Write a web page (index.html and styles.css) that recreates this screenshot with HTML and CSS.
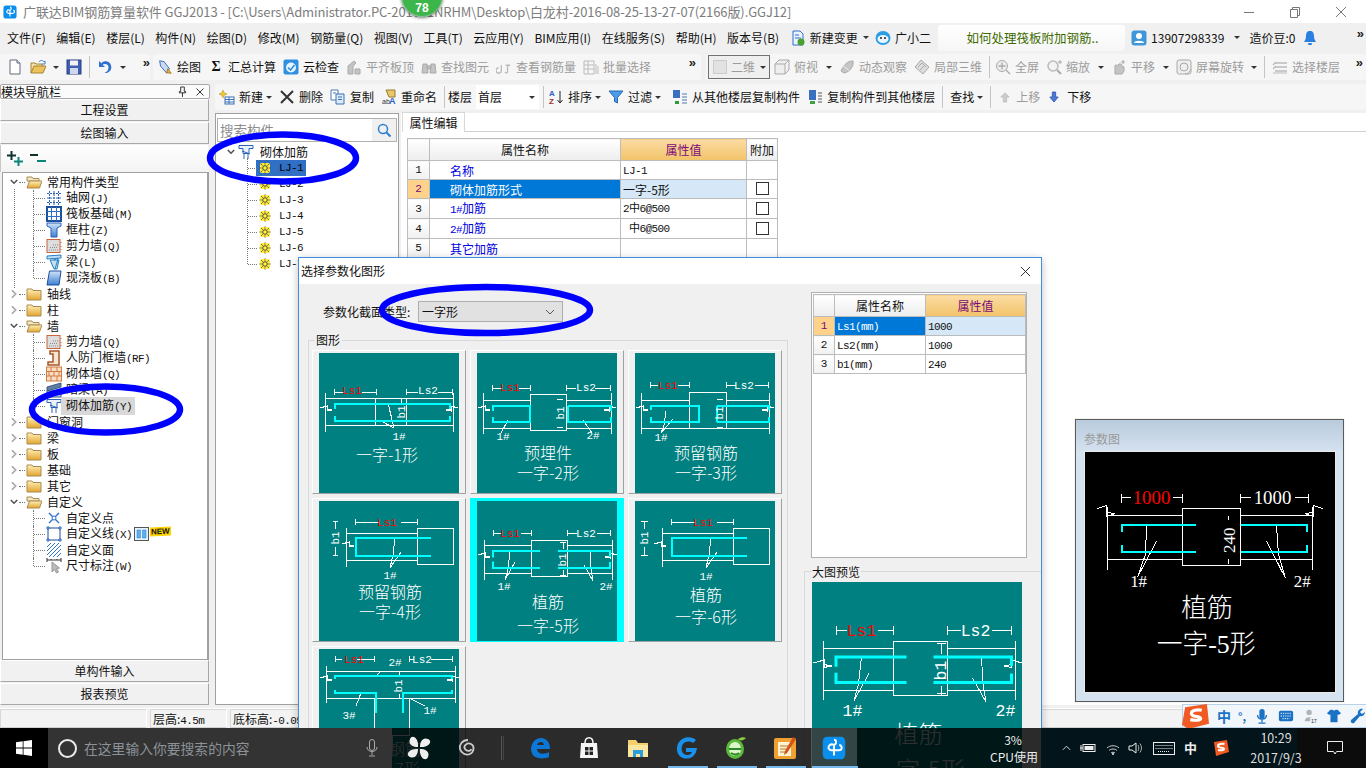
FILE: index.html
```html
<!DOCTYPE html>
<html lang="zh-CN">
<head>
<meta charset="utf-8">
<title>广联达BIM钢筋算量软件 GGJ2013</title>
<link rel="stylesheet" href="styles.css">
</head>
<body>
<svg class="defs" width="0" height="0" aria-hidden="true">
<defs>
<linearGradient id="gy" x1="0" y1="0" x2="0" y2="1"><stop offset="0" stop-color="#fff0b8"/><stop offset="1" stop-color="#e2a52e"/></linearGradient>
<linearGradient id="gb" x1="0" y1="0" x2="0" y2="1"><stop offset="0" stop-color="#cfe4fa"/><stop offset="1" stop-color="#3f7fd0"/></linearGradient>
</defs>
<symbol id="chr" viewBox="0 0 8 12"><path d="M1.500 1.500 6 6l-4.500 4.500" fill="none" stroke="#a8a8a8" stroke-width="2"/></symbol>
<symbol id="chd" viewBox="0 0 10 8"><path d="M1 1.500l4 4 4-4" fill="none" stroke="#555" stroke-width="2"/></symbol>
<symbol id="fc" viewBox="0 0 16 16"><path d="M1 3h5l1 1.500h8V14H1z" fill="url(#gy)" stroke="#a98c55"/></symbol>
<symbol id="fo" viewBox="0 0 16 16"><path d="M1 3h5l1 1.500h6V7H1z" fill="#f4e6c0" stroke="#a98c55"/><path d="M1 14 3.500 7H16l-2.500 7z" fill="url(#gy)" stroke="#a98c55"/></symbol>
<symbol id="grid" viewBox="0 0 16 16"><path d="M3.500 1v14M8 1v14M12.500 1v14M1 3.500h14M1 8h14M1 12.500h14" stroke="#2b62b8" stroke-dasharray="2 1" fill="none"/></symbol>
<symbol id="raft" viewBox="0 0 16 16"><rect x="1" y="1" width="14" height="14" fill="#fff" stroke="#1c4f9c" stroke-width="2"/><path d="M5.500 1v14M10.500 1v14M1 5.500h14M1 10.500h14" stroke="#2f70c8"/></symbol>
<symbol id="col" viewBox="0 0 16 16"><path d="M1 1h14v3l-4 2v9H5V6L1 4z" fill="url(#gb)" stroke="#2b62b8"/></symbol>
<symbol id="shear" viewBox="0 0 16 16"><rect x="1" y="1.500" width="13" height="13" fill="#ddd" stroke="#c8663a"/><path d="M3 12h9M4 9.500h8M7 7h5" stroke="#8a8a8a" stroke-dasharray="1 1"/><path d="M15 4v1M15 8v1M15 11v1" stroke="#c8663a"/></symbol>
<symbol id="beam" viewBox="0 0 16 16"><path d="M1 2l14-1v3L1 5zM4 6h9l-2 9H8z" fill="#bfe0f4" stroke="#2b7fc0"/><path d="M8 6l4-2M9 15 12 5" stroke="#2b7fc0" fill="none"/></symbol>
<symbol id="slab" viewBox="0 0 16 16"><path d="M3.500 1H15l-2 14H1z" fill="url(#gb)" stroke="#1c4f9c"/></symbol>
<symbol id="rfw" viewBox="0 0 16 16"><path d="M4 1h9v14H2v-3h5V4H4z" fill="#f6e5cf" stroke="#a9562a" stroke-width="1.500"/></symbol>
<symbol id="brick" viewBox="0 0 16 16"><rect x=".5" y="1" width="15" height="14" fill="#f9dcc2" stroke="#d07a45"/><path d="M.5 5.500h15M.5 10h15M5 1v4.500M11 1v4.500M3 5.500V10M8 5.500V10M13 5.500V10M5 10v5M11 10v5" stroke="#d07a45" fill="none"/></symbol>
<symbol id="lj" viewBox="0 0 16 16"><path d="M1 1.500h14v3H11v5H5v-5H1zM6 10v5M10 10v5M4 7l8 3" fill="#eaf3fb" stroke="#2b62b8"/></symbol>
<symbol id="hid" viewBox="0 0 16 16"><path d="M1 5 15 1v4L1 9z" fill="#5d7fa6" stroke="#3c5a80"/><path d="M1 9h14v6H1z" fill="#cfd9e6" stroke="#3c5a80"/></symbol>
<symbol id="pt" viewBox="0 0 16 16"><path d="M3 3l10 10M13 3 3 13" stroke="#2f70c8" stroke-width="1.400"/><circle cx="8" cy="8" r="2" fill="#fff" stroke="#2f70c8"/></symbol>
<symbol id="ln" viewBox="0 0 16 16"><rect x="2" y="2" width="12" height="12" fill="none" stroke="#1c4f9c"/><path d="M1 1h2v2H1zM13 1h2v2h-2zM1 13h2v2H1zM13 13h2v2h-2z" fill="#fff" stroke="#1c5fc0"/></symbol>
<symbol id="fa" viewBox="0 0 16 16"><path d="M1 5 5 1M1 9 9 1M1 13 13 1M3 15 15 3M7 15l8-8M11 15l4-4" stroke="#2f70c8"/></symbol>
<symbol id="dm" viewBox="0 0 16 16"><path d="M1 0v4M1 2h14M15 0v4M5 2v-1M11 2v-1" stroke="#333" fill="none"/><path d="M6 4l0 10 2.500-2.500 2 3.500 2-1-2-3.500 3-.5z" fill="#bbb" stroke="#999"/></symbol>
<symbol id="gear" viewBox="0 0 12 12"><rect x="1" y="1" width="10" height="10" rx="2" fill="#ffef3a"/><circle cx="6" cy="6" r="2.300" fill="#fff23a" stroke="#444"/><path d="M6 .5v2M6 9.500v2M.5 6h2M9.500 6h2M2 2l1.500 1.500M10 2 8.500 3.500M2 10l1.500-1.500M10 10 8.500 8.500" stroke="#333" stroke-dasharray="1 .5"/></symbol>
<symbol id="app" viewBox="0 0 16 16"><rect x=".5" y=".5" width="15" height="15" rx="3" fill="#0a8fee"/><path d="M8 2.500c1.800 0 1.800 3 0 3.500v7M8 6c-3-1.500-5.500 2.500-2 3.500h5c3 0 2.500-3.500.5-3.500" fill="none" stroke="#fff" stroke-width="1.300"/></symbol>
<symbol id="doc" viewBox="0 0 16 16"><path d="M3 1h7l3 3v11H3z" fill="#fff" stroke="#667"/><path d="M10 1v3h3" fill="#dde" stroke="#667"/></symbol>
<symbol id="opn" viewBox="0 0 16 16"><path d="M1 14V4h4l1 1h6v2" fill="#f4e3a8" stroke="#a28437"/><path d="M1 14 4 7h12l-3 7z" fill="#eec25b" stroke="#a28437"/><path d="M9 3c1-2 4-2 5 0l1-1v3h-3" fill="none" stroke="#3a7fc8"/></symbol>
<symbol id="sav" viewBox="0 0 16 16"><rect x="1" y="1" width="14" height="14" fill="#3f5fb5" stroke="#2a3c80"/><rect x="4" y="1.500" width="8" height="5" fill="#f3f3f3"/><rect x="4" y="9" width="8" height="6" fill="#d0d8ec"/></symbol>
<symbol id="und" viewBox="0 0 16 16"><path d="M2 2v6h6L5.500 5.700C8 4 12 5 11.500 9c-.2 2-1.500 4-4 5 4.500.5 7-3 6.800-6C14 2.500 8 .5 4.300 4.200z" fill="#2f6fd0"/></symbol>
<symbol id="drw" viewBox="0 0 18 18"><path d="M3 2l5 1 6 8-3 5-7-8z" fill="#c9dbf4" stroke="#2f5fa8"/><path d="M12 11l4 5-5-.5z" fill="#f5b642" stroke="#a67312"/></symbol>
<symbol id="cld" viewBox="0 0 16 16"><rect x=".5" y=".5" width="15" height="15" rx="2" fill="#2f8fe0"/><circle cx="8" cy="8.500" r="5" fill="#e7f3fd"/><path d="M5 8.500l2.500 2.500 4-5" fill="none" stroke="#2f8fe0" stroke-width="1.600"/></symbol>
<symbol id="ga" viewBox="0 0 16 16"><path d="M2 15V7l6-5 2 2-3 3v8zM9 15v-5h5v5z" fill="#c4c4c4" stroke="#aaa"/></symbol>
<symbol id="gb2" viewBox="0 0 16 16"><path d="M2 5h4l1 9H1zM10 5h4l1 9H9zM6 7h4v3H6z" fill="#c4c4c4" stroke="#aaa"/></symbol>
<symbol id="gc" viewBox="0 0 18 16"><path d="M3 9a3 3 0 1 0 3 3V6M11 6h5M13 6v7c0 2-2 2-3 1" fill="none" stroke="#bbb" stroke-width="1.500"/></symbol>
<symbol id="gd" viewBox="0 0 16 16"><path d="M1 2h10v13H1zM1 6h10M1 10h10M5 2v13M13 5v10M15 7v8" fill="none" stroke="#bbb"/></symbol>
<symbol id="cube" viewBox="0 0 16 16"><path d="M1 5h10v10H1zM1 5l4-4h10L11 5M15 1v10l-4 4" fill="#eee" stroke="#aaa"/></symbol>
<symbol id="orb" viewBox="0 0 16 16"><path d="M2 12C5 5 9 2 14 2c1 5-3 11-9 12z" fill="#c6c6c6" stroke="#aaa"/><path d="M4 7c2 1 6 4 7 6" stroke="#eee" fill="none"/></symbol>
<symbol id="loc" viewBox="0 0 16 16"><path d="M1 8l6-7 8 7-6 7z" fill="#ddd" stroke="#aaa"/><path d="M4 8l4-4 4 4M6 11l4-4" stroke="#aaa" fill="none"/></symbol>
<symbol id="zm" viewBox="0 0 16 16"><circle cx="7" cy="7" r="5.500" fill="#eee" stroke="#aaa"/><path d="M7 3.500v7M3.500 7h7M11 11l4 4" stroke="#aaa" stroke-width="1.300"/></symbol>
<symbol id="zm2" viewBox="0 0 16 16"><circle cx="7" cy="7" r="5" fill="#f3f3f3" stroke="#bbb" stroke-width="1.500"/><path d="M11 11l4 4" stroke="#aaa" stroke-width="2"/><path d="M14 1v4M12 3h4" stroke="#aaa"/></symbol>
<symbol id="pan" viewBox="0 0 16 16"><path d="M4 15V8C3 6 6 5 7 7l1-2c2-1 3 1 3 2l2 1v4l-2 3z" fill="#c4c4c4" stroke="#aaa"/><path d="M12 1v4M10 3h4" stroke="#aaa"/></symbol>
<symbol id="rot" viewBox="0 0 16 16"><rect x="1" y="1" width="14" height="14" rx="2" fill="#eee" stroke="#aaa"/><circle cx="8" cy="8" r="4" fill="none" stroke="#aaa"/><path d="M9 15c3 0 5-2 6-5" stroke="#aaa" fill="none"/></symbol>
<symbol id="flr" viewBox="0 0 16 16"><path d="M3 4h12M3 8h12M3 12h12M1 6l3-3M1 10l3-3" stroke="#bbb" fill="none" stroke-width="1.300"/><path d="M1 14h14" stroke="#bbb"/></symbol>
<symbol id="nw2" viewBox="0 0 16 16"><rect x="6" y="8" width="9" height="7" fill="#fff" stroke="#3a70b5"/><path d="M6 10.500h9M6 13h9M10 8v7" stroke="#3a70b5"/><path d="M4 1l1.200 2.800L8 5 5.200 6.200 4 9 2.800 6.200 0 5l2.800-1.200z" fill="#f2c833" stroke="#b28a15" stroke-width=".5"/></symbol>
<symbol id="del" viewBox="0 0 16 16"><path d="M2 2l12 12M14 2 2 14" stroke="#333" stroke-width="2"/></symbol>
<symbol id="cp" viewBox="0 0 16 16"><path d="M1 1h7v10H1z" fill="#fff" stroke="#4a7ab5"/><path d="M6 5h8v10H6z" fill="#dbe9f8" stroke="#3a70b5"/><path d="M3 4h3M8 8h4M8 10.500h4" stroke="#3a70b5"/></symbol>
<symbol id="flt" viewBox="0 0 16 16"><path d="M1 2h14L9.500 8.500V14l-3-1.500v-4z" fill="#4a9bea" stroke="#2868b0"/></symbol>
<symbol id="cpf" viewBox="0 0 16 16"><path d="M1 1h7v8H1z" fill="#3a70c0"/><path d="M10 5h5M10 8h5M10 11h5M10 14h5" stroke="#4a7ab5"/><path d="M3 12h4v3H3z" fill="#2e9a3b"/></symbol>
<symbol id="upa" viewBox="0 0 12 14"><path d="M6 2l5 5H8v6H4V7H1z" fill="#ccc" stroke="#bbb"/></symbol>
<symbol id="dna" viewBox="0 0 12 14"><path d="M4 1h4v6h3l-5 6-5-6h3z" fill="#4a7ad8" stroke="#2f56ad"/></symbol>
<symbol id="cpy2" viewBox="0 0 16 16"><rect x="2" y="1" width="7" height="10" fill="#3a70c0"/><path d="M11 4h4M11 7h4M11 10h4M11 13h4" stroke="#555"/><path d="M3 12h5v3H3z" fill="#3da241"/></symbol>
<symbol id="brd" viewBox="0 0 16 16"><path d="M3 1h7l3 3v11H3z" fill="#eaf3fc" stroke="#2f6fc8"/><path d="M5 5h4M5 8h6" stroke="#2f6fc8"/><circle cx="11" cy="12" r="3.500" fill="#4aa02c"/></symbol>
<symbol id="bot" viewBox="0 0 16 16"><ellipse cx="8" cy="8" rx="7.500" ry="7" fill="#2c9ee6"/><ellipse cx="8" cy="9" rx="5.500" ry="4" fill="#eaf7ff"/><circle cx="6" cy="8" r="1" fill="#222"/><circle cx="10" cy="8" r="1" fill="#222"/></symbol>
<symbol id="usr" viewBox="0 0 16 16"><rect x=".5" y=".5" width="15" height="15" rx="3" fill="#3f96d8"/><circle cx="8" cy="6" r="3" fill="#fff"/><path d="M3 13c0-3 10-3 10 0z" fill="#fff"/></symbol>
<symbol id="bel" viewBox="0 0 14 16"><path d="M7 1c3 0 4 2 4 5 0 3 1 4 2 6H1c1-2 2-3 2-6 0-3 1-5 4-5z" fill="#2b7fe0"/><rect x="5" y="13" width="4" height="2" rx="1" fill="#2b7fe0"/></symbol>
</svg>

<div class="app">
  <header class="titlebar">
    <svg class="ic14"><use href="#app"/></svg>
    <span class="wintitle">广联达BIM钢筋算量软件 GGJ2013 - [C:\Users\Administrator.PC-201701NRHM\Desktop\白龙村-2016-08-25-13-27-07(2166版).GGJ12]</span>
    <div class="winbtns">
      <svg class="wb" viewBox="0 0 12 12"><path d="M1 6.500h10" stroke="#777"/></svg>
      <svg class="wb" viewBox="0 0 12 12"><path d="M1.500 3.500h7v8h-7zM3.500 3.500v-2h7v8h-2" fill="none" stroke="#777"/></svg>
      <svg class="wb" viewBox="0 0 12 12"><path d="M1 1l10 10M11 1 1 11" stroke="#777"/></svg>
    </div>
  </header>

  <nav class="menubar">
    <span>文件(F)</span><span>编辑(E)</span><span>楼层(L)</span><span>构件(N)</span><span>绘图(D)</span><span>修改(M)</span><span>钢筋量(Q)</span><span>视图(V)</span><span>工具(T)</span><span>云应用(Y)</span><span>BIM应用(I)</span><span>在线服务(S)</span><span>帮助(H)</span><span>版本号(B)</span>
    <span class="mi"><svg class="ic16"><use href="#brd"/></svg>新建变更</span><i class="ar ar-n"></i>
    <span class="mi bot"><svg class="ic16"><use href="#bot"/></svg>广小二</span>
    <span class="news">如何处理筏板附加钢筋..</span>
    <span class="mi acct"><svg class="ic16"><use href="#usr"/></svg>13907298339</span><i class="ar ar-m"></i>
    <span class="bean">造价豆:0</span><svg class="bell"><use href="#bel"/></svg>
    <span class="more more-m">»</span>
  </nav>

  <div class="toolrow">
    <div class="seg seg1">
      <svg class="ic16"><use href="#doc"/></svg>
      <svg class="ic16 m7"><use href="#opn"/></svg><i class="ar"></i>
      <svg class="ic16 m7"><use href="#sav"/></svg>
      <b class="sep"></b>
      <svg class="ic16 m7"><use href="#und"/></svg><i class="ar"></i>
      <span class="more">»</span>
    </div>
    <div class="seg seg2">
      <span class="ti first"><svg class="ic16"><use href="#drw"/></svg>绘图</span>
      <span class="ti"><b class="sigma">Σ</b>汇总计算</span>
      <span class="ti"><svg class="ic16"><use href="#cld"/></svg>云检查</span>
      <span class="ti off"><svg class="ic16"><use href="#ga"/></svg>平齐板顶</span>
      <span class="ti off"><svg class="ic16"><use href="#gb2"/></svg>查找图元</span>
      <span class="ti off"><svg class="ic16"><use href="#gc"/></svg>查看钢筋量</span>
      <span class="ti off"><svg class="ic16"><use href="#gd"/></svg>批量选择</span>
      <span class="more">»</span>
    </div>
    <div class="seg seg3">
      <span class="combo off"><i class="sq"></i>二维<i class="ar"></i></span>
      <span class="ti off t4"><svg class="ic16"><use href="#cube"/></svg>俯视</span><i class="ar a8"></i>
      <span class="ti off"><svg class="ic16"><use href="#orb"/></svg>动态观察</span>
      <span class="ti off"><svg class="ic16"><use href="#loc"/></svg>局部三维</span>
      <b class="sep"></b>
      <span class="ti off t5"><svg class="ic16"><use href="#zm"/></svg>全屏</span>
      <span class="ti off"><svg class="ic16"><use href="#zm2"/></svg>缩放</span><i class="ar a8"></i>
      <span class="ti off"><svg class="ic16"><use href="#pan"/></svg>平移</span><i class="ar a8"></i>
      <span class="ti off"><svg class="ic16"><use href="#rot"/></svg>屏幕旋转</span><i class="ar"></i>
      <b class="sep"></b>
      <span class="ti off"><svg class="ic16"><use href="#flr"/></svg>选择楼层</span>
      <span class="more">»</span>
    </div>
  </div>

  <div class="mainrow">
    <aside class="nav">
      <div class="navhead"><span>模块导航栏</span>
        <svg class="pin" viewBox="0 0 10 12"><path d="M3 1h4v5h1.500v1.500h-7V6H3zM5 7.500V12" fill="none" stroke="#222"/></svg>
        <svg class="navx" viewBox="0 0 10 10"><path d="M1.500 1.500l7 7M8.500 1.500l-7 7" stroke="#333"/></svg></div>
      <button class="navbtn">工程设置</button>
      <button class="navbtn">绘图输入</button>
      <div class="plusbar">
        <svg viewBox="0 0 16 15" class="pm"><path d="M0 4.500h9M4.500 0v9" stroke="#10312e" stroke-width="2"/><path d="M7 10.500h9M11.500 6v9" stroke="#0d8478" stroke-width="2"/></svg>
        <svg viewBox="0 0 16 15" class="pm"><path d="M0 4h8" stroke="#10312e" stroke-width="2"/><path d="M7 10h9" stroke="#0d8478" stroke-width="2"/></svg>
      </div>
      <ul class="tree">
        <li class="n open"><div class="row"><svg class="ch"><use href="#chd"/></svg><svg class="ic16"><use href="#fo"/></svg><span class="lab">常用构件类型</span></div>
          <ul class="kids">
            <li class="leaf"><svg class="ic16"><use href="#grid"/></svg><span class="lab">轴网<tt>(J)</tt></span></li>
            <li class="leaf"><svg class="ic16"><use href="#raft"/></svg><span class="lab">筏板基础<tt>(M)</tt></span></li>
            <li class="leaf"><svg class="ic16"><use href="#col"/></svg><span class="lab">框柱<tt>(Z)</tt></span></li>
            <li class="leaf"><svg class="ic16"><use href="#shear"/></svg><span class="lab">剪力墙<tt>(Q)</tt></span></li>
            <li class="leaf"><svg class="ic16"><use href="#beam"/></svg><span class="lab">梁<tt>(L)</tt></span></li>
            <li class="leaf"><svg class="ic16"><use href="#slab"/></svg><span class="lab">现浇板<tt>(B)</tt></span></li>
          </ul>
        </li>
        <li class="n"><div class="row"><svg class="ch"><use href="#chr"/></svg><svg class="ic16"><use href="#fc"/></svg><span class="lab">轴线</span></div></li>
        <li class="n"><div class="row"><svg class="ch"><use href="#chr"/></svg><svg class="ic16"><use href="#fc"/></svg><span class="lab">柱</span></div></li>
        <li class="n open"><div class="row"><svg class="ch"><use href="#chd"/></svg><svg class="ic16"><use href="#fo"/></svg><span class="lab">墙</span></div>
          <ul class="kids">
            <li class="leaf"><svg class="ic16"><use href="#shear"/></svg><span class="lab">剪力墙<tt>(Q)</tt></span></li>
            <li class="leaf"><svg class="ic16"><use href="#rfw"/></svg><span class="lab">人防门框墙<tt>(RF)</tt></span></li>
            <li class="leaf"><svg class="ic16"><use href="#brick"/></svg><span class="lab">砌体墙<tt>(Q)</tt></span></li>
            <li class="leaf"><svg class="ic16"><use href="#hid"/></svg><span class="lab">暗梁<tt>(A)</tt></span></li>
            <li class="leaf"><svg class="ic16"><use href="#lj"/></svg><span class="lab picked">砌体加筋<tt>(Y)</tt></span></li>
          </ul>
        </li>
        <li class="n"><div class="row"><svg class="ch"><use href="#chr"/></svg><svg class="ic16"><use href="#fc"/></svg><span class="lab">门窗洞</span></div></li>
        <li class="n"><div class="row"><svg class="ch"><use href="#chr"/></svg><svg class="ic16"><use href="#fc"/></svg><span class="lab">梁</span></div></li>
        <li class="n"><div class="row"><svg class="ch"><use href="#chr"/></svg><svg class="ic16"><use href="#fc"/></svg><span class="lab">板</span></div></li>
        <li class="n"><div class="row"><svg class="ch"><use href="#chr"/></svg><svg class="ic16"><use href="#fc"/></svg><span class="lab">基础</span></div></li>
        <li class="n"><div class="row"><svg class="ch"><use href="#chr"/></svg><svg class="ic16"><use href="#fc"/></svg><span class="lab">其它</span></div></li>
        <li class="n open last"><div class="row"><svg class="ch"><use href="#chd"/></svg><svg class="ic16"><use href="#fo"/></svg><span class="lab">自定义</span></div>
          <ul class="kids">
            <li class="leaf"><svg class="ic16"><use href="#pt"/></svg><span class="lab">自定义点</span></li>
            <li class="leaf"><svg class="ic16"><use href="#ln"/></svg><span class="lab">自定义线<tt>(X)</tt></span>
              <svg class="tag" viewBox="0 0 15 14"><rect x=".5" y=".5" width="14" height="13" fill="#e6f2fb" stroke="#555"/><path d="M3 3h3.500v8H3zM8.500 3H12v8H8.500z" fill="#5fb0ec" stroke="#1f7fd0" stroke-width=".5"/></svg>
              <span class="newtag">NEW</span></li>
            <li class="leaf"><svg class="ic16"><use href="#fa"/></svg><span class="lab">自定义面</span></li>
            <li class="leaf"><svg class="ic16"><use href="#dm"/></svg><span class="lab">尺寸标注<tt>(W)</tt></span></li>
          </ul>
        </li>
      </ul>
      <button class="navbtn">单构件输入</button>
      <button class="navbtn">报表预览</button>
    </aside>

    <div class="work">
      <div class="toolbar3">
        <span class="ti"><svg class="ic16"><use href="#nw2"/></svg>新建</span><i class="ar a3"></i>
        <span class="ti"><svg class="ic16"><use href="#del"/></svg>删除</span>
        <span class="ti"><svg class="ic16"><use href="#cp"/></svg>复制</span>
        <span class="ti"><svg class="ic16" viewBox="0 0 16 16"><path d="M5 1l9 0v7H8z" fill="#e8c86a" stroke="#9a7c2a"/><text x="1" y="15" class="mini">ab</text><text x="8" y="15" class="mini2">A</text></svg>重命名</span>
        <b class="sep"></b><span class="txt3">楼层</span>
        <span class="floor">首层<i class="ar"></i></span>
        <b class="sep s4"></b>
        <span class="ti t4"><svg class="ic16" viewBox="0 0 16 16"><text x="1" y="7" class="sa">A</text><text x="1" y="15" class="sz">Z</text><path d="M12 2v12M9.500 11l2.500 3 2.500-3" fill="none" stroke="#222"/></svg>排序</span><i class="ar a3"></i>
        <span class="ti"><svg class="ic16"><use href="#flt"/></svg>过滤</span><i class="ar a3"></i>
        <span class="ti t11"><svg class="ic16"><use href="#cpf"/></svg>从其他楼层复制构件</span>
        <span class="ti"><svg class="ic16"><use href="#cpy2"/></svg>复制构件到其他楼层</span>
        <b class="sep"></b>
        <span class="txt7">查找</span><i class="ar a3"></i>
        <b class="sep"></b>
        <span class="ti off tup"><svg class="ic10"><use href="#upa"/></svg>上移</span>
        <span class="ti tdn"><svg class="ic10"><use href="#dna"/></svg>下移</span>
      </div>
      <div class="panes">
        <section class="complist">
          <div class="search"><span class="ph">搜索构件...</span><span class="sbtn"><svg viewBox="0 0 16 16" class="ic16"><circle cx="7" cy="7" r="4.500" fill="none" stroke="#2f7fd0" stroke-width="1.500"/><path d="M10.500 10.500l4 4" stroke="#2f7fd0" stroke-width="2"/></svg></span></div>
          <div class="ctree">
            <div class="croot"><svg class="ch"><use href="#chd"/></svg><svg class="ic16"><use href="#lj"/></svg><span>砌体加筋</span></div>
            <ul class="clist">
              <li class="sel"><svg class="ic12"><use href="#gear"/></svg><tt>LJ-1</tt></li>
              <li><svg class="ic12"><use href="#gear"/></svg><tt>LJ-2</tt></li>
              <li><svg class="ic12"><use href="#gear"/></svg><tt>LJ-3</tt></li>
              <li><svg class="ic12"><use href="#gear"/></svg><tt>LJ-4</tt></li>
              <li><svg class="ic12"><use href="#gear"/></svg><tt>LJ-5</tt></li>
              <li><svg class="ic12"><use href="#gear"/></svg><tt>LJ-6</tt></li>
              <li><svg class="ic12"><use href="#gear"/></svg><tt>LJ-7</tt></li>
            </ul>
          </div>
        </section>
        <section class="props">
          <div class="tabs"><span class="tab">属性编辑</span></div>
          <table class="grid ptab">
            <colgroup><col class="c0"><col class="c1"><col class="c2"><col class="c3"></colgroup>
            <tr class="hd"><th></th><th>属性名称</th><th class="hot">属性值</th><th>附加</th></tr>
            <tr><th>1</th><td class="nm">名称</td><td class="mono">LJ-1</td><td></td></tr>
            <tr class="cur"><th>2</th><td class="nm">砌体加筋形式</td><td>一字-5形</td><td><i class="cb"></i></td></tr>
            <tr><th>3</th><td class="nm"><tt>1#</tt>加筋</td><td class="mono">2中6@500</td><td><i class="cb"></i></td></tr>
            <tr><th>4</th><td class="nm"><tt>2#</tt>加筋</td><td class="mono">&nbsp;中6@500</td><td><i class="cb"></i></td></tr>
            <tr><th>5</th><td class="nm">其它加筋</td><td></td><td></td></tr>
          </table>
        </section>
      </div>
    </div>
  </div>

  <footer class="status">
    <span class="sc s0"></span><span class="sc s1">层高:<tt>4.5m</tt></span><span class="sc s2">底标高:<tt>-0.05</tt></span><span class="sc s3"></span>
  </footer>
</div>

<aside class="paramwin">
  <div class="pwtitle">参数图</div>
  <svg class="pwcanvas" viewBox="0 0 252 242">
    <path class="w" d="M36.500 42v9M36.500 46H46M89 46h9.500M98.500 42v9M156.500 42v9M156.500 46H167M212 46h13M225 42v9M22 64.500H98M22 108.500H98M156 64.500H229M156 108.500H229M22.500 55v64M229.500 55v64M98.500 56.500h58v58h-58zM62 73l-1 30-8 23M72 90 53 126M193 73l2 30 7 24M183 90l19 37M145 65v4M145 108v5"/>
    <path class="w" d="M12 57l10-3v11l8-3-8-1M240 57l-10-3v11l-8-3 8-1"/>
    <path class="c2" d="M37 81V74H112M37 94v7H112M157 74h67v7M157 101h67v-7"/>
    <text class="pn red" x="67" y="52">1000</text><text class="pn" x="189" y="52">1000</text>
    <text class="pn s" x="148" y="96" transform="rotate(-90 146 91)">240</text>
    <text class="pn s" x="54" y="136">1#</text><text class="pn s" x="219" y="136">2#</text>
    <text class="ptt" x="123" y="166">植筋</text><text class="ptt" x="122" y="203">一字-5形</text>
  </svg>
</aside>

<section class="dialog">
  <div class="dtitle"><span>选择参数化图形</span><svg class="dclose" viewBox="0 0 12 12"><path d="M1 1l10 10M11 1 1 11" stroke="#222"/></svg></div>
  <div class="dbody">
    <div class="dleft">
      <div class="secrow"><span>参数化截面类型:</span><span class="dsel">一字形<svg class="dch" viewBox="0 0 10 6"><path d="M1 1l4 4 4-4" fill="none" stroke="#555"/></svg></span></div>
      <div class="group">
        <span class="legend">图形</span>
        <div class="cells">
          <div class="cell"><svg viewBox="0 0 140 140" class="thumb">
            <path class="w" d="M15.500 36v6M15.500 39h9M43 39h14M57 36v6M87.500 36v6M87.500 39h11M119 39h14M133 36v6M6 45.500H134M6 72.500H134M6.500 40v39M134.500 40v39M56.500 45v27M87.500 45v27M82.500 45v5M69 50l6 25M62 68l13 7"/>
            <path class="w" d="M1 55l7-2v5l5-1-5-1M139 55l-7-2v5l-5-1 5-1"/>
            <path class="c" d="M16 56V51H131V56M16 63V68H131V63"/>
            <text class="lb red" x="33" y="41">Ls1</text><text class="lb" x="109" y="41">Ls2</text>
            <text class="lb" x="83" y="62" transform="rotate(-90 83 59)">b1</text><text class="lb" x="80" y="87">1#</text>
            <text class="tt" x="68" y="108">一字-1形</text></svg></div>
          <div class="cell"><svg viewBox="0 0 140 140" class="thumb">
            <path class="w" d="M15.500 32v6M15.500 35h9M42 35h11.500M53.500 32v6M89.500 32v6M89.500 35h9M118 35h15M133 32v6M6 47.500H53.500M6 75H53.500M90 47.500H135M90 75H135M6.500 40v41M134.500 40v41M53.500 41.500h36v36h-36zM31 67l-7 13M106 67l9 13M80 46h6M80 74h6"/>
            <path class="w" d="M1 55l7-2v5l5-1-5-1M139 55l-7-2v5l-5-1 5-1"/>
            <path class="c" d="M16 58V53H53V69H16V64M91 53h43v5M91 53v16h43v-5"/>
            <text class="lb red" x="33" y="38">Ls1</text><text class="lb" x="109" y="38">Ls2</text>
            <text class="lb" x="84" y="63" transform="rotate(-90 84 60)">b1</text>
            <text class="lb" x="26" y="87">1#</text><text class="lb" x="116" y="86">2#</text>
            <text class="tt" x="71" y="106">预埋件</text><text class="tt" x="71" y="126">一字-2形</text></svg></div>
          <div class="cell"><svg viewBox="0 0 140 140" class="thumb">
            <path class="w" d="M15.500 29v6M15.500 32h7M43 32h11.500M54.500 29v6M91.500 29v6M91.500 32h9M120 32h13M133 29v6M6 47.500H54M6 75H54M91 47.500H135M91 75H135M6.500 40v41M134.500 40v41M54.500 39.500h37v36h-37zM31 58l-2 14-3 8M38 66l-12 14M82 46h6M82 74h6"/>
            <path class="w" d="M1 55l7-2v5l5-1-5-1M139 55l-7-2v5l-5-1 5-1"/>
            <path class="c" d="M16 57V53H64V69H16V64M82 53h52v4M82 69h52v-5M82 53v16"/>
            <text class="lb red" x="33" y="36">Ls1</text><text class="lb" x="109" y="36">Ls2</text>
            <text class="lb" x="85" y="63" transform="rotate(-90 85 60)">b1</text><text class="lb" x="26" y="88">1#</text>
            <text class="tt" x="71" y="106">预留钢筋</text><text class="tt" x="71" y="126">一字-3形</text></svg></div>
          <div class="cell"><svg viewBox="0 0 140 140" class="thumb">
            <path class="w" d="M36.500 18v6M36.500 21H60M82 21h16.500M98.500 18v6M27.500 32.500H98M27.500 59.500H98M27.500 27v39M98.500 27.500h36v36h-36zM76 36l-2 18-3 13M82 51l-11 16M14 20h5M14 54h5M16.500 20v8M16.500 46v8"/>
            <path class="w" d="M23 43l7-2v5l5-1-5-1"/>
            <path class="c" d="M112 37H37V55H112"/>
            <text class="lb red" x="68" y="25">Ls1</text>
            <text class="lb" x="16" y="41" transform="rotate(-90 16 37)">b1</text><text class="lb" x="71" y="78">1#</text>
            <text class="tt" x="71" y="97">预留钢筋</text><text class="tt" x="71" y="117">一字-4形</text></svg></div>
          <div class="cell sel"><svg viewBox="0 0 140 140" class="thumb">
            <path class="w" d="M16.500 29v6M16.500 32h7M44 32h10.500M54.500 29v6M90.500 29v6M90.500 32h9M120 32h13M133 29v6M7.500 44.500H54.500M7.500 72.500H54.500M90.500 44.500H135.500M90.500 72.500H135.500M7.500 39v39.500M135.500 39v39.500M54.500 39.500h36v36h-36zM33 50l-2 18-3 11M38 61l-10 18M113 50l1 18 2 12M107 64l9 16M83 41h6M83 74h6M86 41v7M86 69v6"/>
            <path class="w" d="M1 54l7-2v5l5-1-5-1M140 54l-7-2v5l-5-1 5-1"/>
            <path class="c" d="M16 56.500V50H63M16 60.500V67H63M81 50h52v6M81 67h52v-6"/>
            <text class="lb red" x="33" y="36">Ls1</text><text class="lb" x="109" y="36">Ls2</text>
            <text class="lb" x="86" y="62" transform="rotate(-90 86 59)">b1</text>
            <text class="lb" x="27" y="89">1#</text><text class="lb" x="129" y="89">2#</text>
            <text class="tt" x="71" y="107">植筋</text><text class="tt" x="71" y="131">一字-5形</text></svg></div>
          <div class="cell"><svg viewBox="0 0 140 140" class="thumb">
            <path class="w" d="M36.500 18v6M36.500 21H60M82 21h16.500M98.500 18v6M27.500 32.500H98M27.500 59.500H98M27.500 27v39M98.500 27.500h36v36h-36zM76 36l-2 18-3 13M82 51l-11 16M6 20h7M6 54h7M9.500 20v8M9.500 46v8"/>
            <path class="w" d="M19 43l7-2v5l5-1-5-1"/>
            <path class="c" d="M112 37H37V55H112"/>
            <text class="lb red" x="68" y="25">Ls1</text>
            <text class="lb" x="9" y="41" transform="rotate(-90 9 37)">b1</text><text class="lb" x="71" y="79">1#</text>
            <text class="tt" x="71" y="100">植筋</text><text class="tt" x="71" y="122">一字-6形</text></svg></div>
          <div class="cell"><svg viewBox="0 0 140 140" class="thumb">
            <path class="w" d="M16.500 7v6M16.500 10h6M38 10h17M55.500 7v6M90.500 7v6M90.500 10h4M112 10h21M133.500 7v6M7 22.500H136M7 49.500H136M7.500 17v37M136 17v37M80.500 22v6M80.500 45v5M55.500 50v36H73V100M90.500 50v36H73M62 22l-5 5M42 44l-5 13M92 50l14 7"/>
            <path class="w" d="M1 29l7-2v5l5-1-5-1M140 29l-7-2v5l-5-1 5-1"/>
            <path class="c" d="M16 30V27H133V30M16 41v3H57V64M133 41v3H84V64"/>
            <text class="lb red" x="35" y="14">Ls1</text><text class="lb" x="103" y="14">Ls2</text><text class="lb" x="76" y="17">2#</text>
            <text class="lb" x="80" y="40" transform="rotate(-90 80 37)">b1</text>
            <text class="lb" x="30" y="70">3#</text><text class="lb" x="111" y="65">1#</text>
            <text class="tt" x="70" y="106">预留钢筋</text><text class="tt" x="70" y="126">一字-7形</text></svg></div>
        </div>
      </div>
    </div>
    <div class="dright">
      <div class="pbox">
        <table class="grid qtab">
          <colgroup><col class="q0"><col class="q1"><col class="q2"></colgroup>
          <tr class="hd"><th></th><th>属性名称</th><th class="hot">属性值</th></tr>
          <tr class="cur"><th>1</th><td class="mono">Ls1(mm)</td><td class="mono">1000</td></tr>
          <tr><th>2</th><td class="mono">Ls2(mm)</td><td class="mono">1000</td></tr>
          <tr><th>3</th><td class="mono">b1(mm)</td><td class="mono">240</td></tr>
        </table>
      </div>
      <div class="pgroup">
        <span class="legend2">大图预览</span>
        <svg viewBox="0 0 140 140" class="big">
          <path class="w" d="M16.500 29v6M16.500 32h7M44 32h10.500M54.500 29v6M90.500 29v6M90.500 32h9M120 32h13M133 29v6M7.500 44.500H54.500M7.500 72.500H54.500M90.500 44.500H135.500M90.500 72.500H135.500M7.500 39v39.500M135.500 39v39.500M54.500 39.500h36v36h-36zM33 50l-2 18-3 11M38 61l-10 18M113 50l1 18 2 12M107 64l9 16M83 41h6M83 74h6M86 41v7M86 69v6"/>
          <path class="w" d="M1 54l7-2v5l5-1-5-1M140 54l-7-2v5l-5-1 5-1"/>
          <path class="c" d="M16 56.500V50H63M16 60.500V67H63M81 50h52v6M81 67h52v-6"/>
          <text class="lb red" x="33" y="36">Ls1</text><text class="lb" x="109" y="36">Ls2</text>
          <text class="lb" x="86" y="62" transform="rotate(-90 86 59)">b1</text>
          <text class="lb" x="27" y="89">1#</text><text class="lb" x="129" y="89">2#</text>
          <text class="tt" x="71" y="107">植筋</text><text class="tt" x="71" y="131">一字-5形</text>
        </svg>
      </div>
    </div>
  </div>
</section>

<svg class="marks" viewBox="0 0 1366 768" aria-hidden="true">
  <ellipse cx="283" cy="158" rx="73" ry="23.500"/>
  <ellipse cx="106" cy="409.500" rx="74" ry="23"/>
  <ellipse cx="486" cy="310" rx="104" ry="23"/>
</svg>

<div class="badge">78</div>

<div class="ime">
  <svg class="sg" viewBox="0 0 26 24"><path d="M3 3 24 0l2 19-20 5L0 20z" fill="#f15a22"/><path d="M19 6c-4-1-10 0-10 3 0 4 9 2 9 5 0 2-6 2-10 1" fill="none" stroke="#fff" stroke-width="3"/></svg>
  <span class="imez">中</span><span class="imep">°,</span>
  <svg class="imei" viewBox="0 0 16 18"><rect x="5" y="1" width="6" height="11" rx="3" fill="#1a72c5"/><path d="M3 8c0 6 10 6 10 0M8 13v3M4 17h8" fill="none" stroke="#1a72c5" stroke-width="1.500"/></svg>
  <svg class="imei" viewBox="0 0 18 16"><rect x="1" y="2" width="16" height="12" rx="2" fill="#1a72c5"/><path d="M3 5h12M3 8h12M5 11h8" stroke="#fff" stroke-dasharray="1.500 1"/></svg>
  <svg class="imei" viewBox="0 0 18 16"><circle cx="8" cy="4" r="3" fill="#aab4bc"/><path d="M3 14c0-6 10-6 10 0z" fill="#aab4bc"/><rect x="9" y="10" width="9" height="6" fill="#eef2f6"/><text x="10" y="16" class="imen">17</text></svg>
  <svg class="imei" viewBox="0 0 18 16"><path d="M5 1h2c1 1 3 1 4 0h2l4 4-3 2-1-1v9H5V6L4 7 1 5z" fill="#1a72c5"/></svg>
  <svg class="imei" viewBox="0 0 16 16"><path d="M15 4c0 3-3 5-5 4l-6 7c-2 1-4-1-3-3l7-6c-1-3 2-6 5-5l-3 3 2 2z" fill="#1a72c5"/></svg>
</div>

<footer class="taskbar">
  <div class="start"><svg viewBox="0 0 16 16" class="ic16"><path d="M0 2.200 6.700 1.300v6.300H0zM7.500 1.200 16 0v7.600H7.500zM0 8.400h6.700v6.300L0 13.800zM7.500 8.400H16V16l-8.500-1.200z" fill="#fff"/></svg></div>
  <div class="tsearch"><i class="ring"></i><span>在这里输入你要搜索的内容</span>
    <svg class="tmic" viewBox="0 0 12 18"><rect x="3.500" y=".5" width="5" height="11" rx="2.500" fill="none" stroke="#aaa"/><path d="M1 8c0 6 10 6 10 0M6 13v3M3 17h6" fill="none" stroke="#aaa"/></svg>
  </div>
  <div class="apps">
    <span class="ta"><svg viewBox="0 0 24 24" class="ic24"><path d="M11 11C5 11 1 8 3 3s9-1 8 8zM13 11c0-6 3-10 8-8s1 9-8 8zM13 13c6 0 10 3 8 8s-9 1-8-8zM11 13c0 6-3 10-8 8s-1-9 8-8z" fill="#eee"/></svg></span>
    <span class="ta"><svg viewBox="0 0 24 24" class="ic24"><path d="M12 4c-6 0-9 5-8 9s6 7 10 5 5-8 1-10-8 2-6 5 6 2 6 0" fill="none" stroke="#ccc" stroke-width="1.800"/></svg></span>
    <b class="tsep"></b>
    <span class="ta"><svg viewBox="0 0 24 24" class="ic24"><path d="M3 14C3 6 8 2 13 2c6 0 9 5 9 11H9c0 5 7 6 12 3v5c-7 3-16 1-17-4-.5-1-.8-2-1-3zM9 9h7c0-4-6-4-7 0z" fill="#0b78d7"/></svg></span>
    <span class="ta"><svg viewBox="0 0 24 24" class="ic24"><path d="M4 7h16l1 15H3z" fill="#f5f5f5"/><path d="M8 7c0-7 8-7 8 0" fill="none" stroke="#f5f5f5" stroke-width="1.500"/><path d="M8 11h3.500v3.500H8zM12.500 11H16v3.500h-3.500zM8 15.500h3.500V19H8zM12.500 15.500H16V19h-3.500z" fill="#222"/></svg></span>
    <span class="ta"><svg viewBox="0 0 24 24" class="ic24"><path d="M2 4h8l2 3h10v14H2z" fill="#f3d06c"/><path d="M2 9h20v12H2z" fill="#fbe6a0"/><path d="M7 14h10v7h-3v-3h-4v3H7z" fill="#2a9ddc"/></svg></span>
    <span class="ta"><svg viewBox="0 0 24 24" class="ic24"><path d="M21 4C17 0 8 0 4 6c-4 6-2 14 4 16 6 2 13-1 14-10H11v4h6c-1 3-5 4-8 2-3-2-3-7-1-10 3-3 7-3 10-1z" fill="#1a90ea"/></svg></span>
    <span class="ta"><svg viewBox="0 0 24 24" class="ic24"><ellipse cx="11" cy="13" rx="9" ry="10" fill="#5ab93a"/><ellipse cx="11" cy="13" rx="6" ry="7" fill="#dff3c8"/><path d="M5 13h12M7 17c3 2 6 2 8 0" stroke="#2a8a2a" stroke-width="2" fill="none"/><path d="M14 3c3-2 6-2 8-1-2 2-4 3-7 2z" fill="#8ccf3a"/></svg></span>
    <span class="ta"><svg viewBox="0 0 24 24" class="ic24"><rect x="1" y="2" width="22" height="21" rx="2" fill="#f0a030"/><rect x="5" y="6" width="13" height="14" fill="#fff3d0"/><path d="M7 10h8M7 13h8M7 16h5" stroke="#b8792a"/><path d="M20 1l3 2-9 14-3 2 1-4z" fill="#d0541a"/></svg></span>
    <span class="ta act"><svg class="ic24"><use href="#app"/></svg></span>
  </div>
  <div class="cpu"><span>3%</span><span>CPU使用</span></div>
  <div class="tray">
    <svg class="t1x" viewBox="0 0 10 6"><path d="M1 5l4-4 4 4" fill="none" stroke="#eee"/></svg>
    <svg class="t2x" viewBox="0 0 16 10"><rect x="3" y="1.500" width="12" height="7" fill="none" stroke="#eee"/><rect x="4.500" y="3" width="9" height="4" fill="#eee"/><path d="M0 5h3M1 2v6" stroke="#eee"/></svg>
    <svg class="t3x" viewBox="0 0 14 14"><path d="M1 7c3-3 9-3 12 0M3 9.500c2-2 6-2 8 0M5 12c1-1 3-1 4 0" fill="none" stroke="#ccc"/><circle cx="7" cy="13" r="1" fill="#eee"/></svg>
    <svg class="t4x" viewBox="0 0 16 14"><path d="M1 5h3l4-3v10L4 9H1z" fill="none" stroke="#eee"/><path d="M10 4c1 2 1 4 0 6M12 2.500c2 3 2 6 0 9" fill="none" stroke="#aaa"/></svg>
    <svg class="t5x" viewBox="0 0 22 13"><rect x=".5" y=".5" width="21" height="12" fill="none" stroke="#eee"/><path d="M2.500 3.500h17M2.500 6.500h17M5 9.500h12" stroke="#eee" stroke-dasharray="1 1"/></svg>
    <span class="tz">中</span>
    <svg class="t6x" viewBox="0 0 16 16"><path d="M1 2l13-2 2 12-13 4z" fill="#f15a22"/><path d="M11.500 4C9 3.500 5 4 5 6c0 2.500 6 1 6 3 0 1.500-4 1.500-6 1" fill="none" stroke="#fff" stroke-width="2"/></svg>
    <div class="clock"><span>10:29</span><span>2017/9/3</span></div>
    <svg class="t7x" viewBox="0 0 16 15"><path d="M.5.500h15v10H9.500L8 13l-1.500-2.500H.5z" fill="none" stroke="#eee"/></svg>
  </div>
  <i class="ul u1"></i><i class="ul u2"></i><i class="ul u3"></i><i class="ul u4"></i>
</footer>
</body>
</html>
```
FILE: styles.css
```css
* { box-sizing: border-box; }
html, body { margin: 0; padding: 0; }
body { width: 1366px; height: 768px; overflow: hidden; position: relative; background: #fff;
  font: 12px/16px "Noto Sans CJK SC", "Liberation Sans", sans-serif; color: #111; }
ul { list-style: none; margin: 0; padding: 0; }
tt { font: 11px/16px "Liberation Mono", monospace; letter-spacing: -.6px; }
i { font-style: normal; display: block; }
.defs { display: block; width: 0; height: 0; overflow: hidden; }
.mini { font: 7px "Liberation Sans", sans-serif; fill: #333; }
.mini2 { font: bold 9px "Liberation Sans", sans-serif; fill: #2f5fc8; }
.sa { font: bold 8px "Liberation Sans", sans-serif; fill: #2f5fc8; }
.sz { font: bold 8px "Liberation Sans", sans-serif; fill: #a03030; }

.ic10 { width: 10px; height: 12px; flex: none; }
.ic12 { width: 12px; height: 12px; flex: none; }
.ic14 { width: 14px; height: 14px; flex: none; }
.ic16 { width: 16px; height: 16px; flex: none; }
.ic24 { width: 24px; height: 24px; flex: none; }

.app { height: 728px; display: flex; flex-direction: column; background: #f0f0f0; }

/* title */
.titlebar { height: 23px; flex: none; background: #fff; display: flex; align-items: center; padding-left: 3px; }
.wintitle { margin-left: 6px; color: #7d7d7d; font-size: 13px; white-space: nowrap; letter-spacing: -.1px; }
.winbtns { margin-left: auto; display: flex; gap: 34px; padding-right: 19px; }
.wb { width: 12px; height: 12px; }

/* menu */
.menubar { height: 29px; flex: none; display: flex; align-items: center; gap: 10.6px; padding-left: 7px; background: #f0f0f0; white-space: nowrap; }
.mi { display: flex; align-items: center; gap: 4px; }
.bot { margin-left: -5px; }
.news { width: 187px; height: 26px; margin-left: -3px; background: linear-gradient(#fff, #f6f6f6); color: #3d6b00; border-radius: 3px; text-align: center; line-height: 26px; font-size: 12.500px; padding-left: 1px; }
.acct { margin-left: -5px; }
.bean { margin-left: -1px; }
.bell { width: 14px; height: 16px; margin-left: -3px; }
.more { font: bold 13px/14px "Liberation Sans", sans-serif; color: #222; margin-left: auto; align-self: flex-start; margin-top: 2px; }
.more-m { margin-right: 2px; margin-top: 4px; }

.ar { width: 0; height: 0; border: 3px solid transparent; border-top: 3px solid #333; border-bottom: 0; margin-left: 7px; flex: none; }
.ar-m { margin-left: -1px; }
.ar-n { margin-left: -5px; }
.a3 { margin-left: 3px; }
.a8 { margin-left: 8px; }

/* toolbar */
.toolrow { height: 26px; margin-top: 2px; flex: none; display: flex; gap: 3px; }
.seg { background: #f6f6f6; border-radius: 3px; display: flex; align-items: center; height: 26px; white-space: nowrap; }
.seg1 { width: 150px; padding-left: 7px; }
.seg2 { width: 548px; padding-left: 4px; padding-right: 5px; }
.seg3 { flex: 1; margin-left: 2px; padding-left: 2px; padding-right: 3px; }
.m7 { margin-left: 7px; }
.sep { width: 1px; height: 22px; background: #c4c4c4; margin-left: 7px; flex: none; }
.s4 { margin-left: 4px; }
.ti { display: flex; align-items: center; gap: 4px; margin-left: 7px; flex: none; }
.first { margin-left: 0; }
.t4 { margin-left: 4px; }
.t5 { margin-left: 5px; }
.t11 { margin-left: 11px; }
.tup { margin-left: 9px; gap: 6px; }
.tdn { margin-left: 9px; gap: 8px; }
.off { color: #9c9c9c; }
.sigma { width: 16px; text-align: center; font: bold 14px "Liberation Serif", serif; color: #111; }
.combo { display: flex; align-items: center; gap: 4px; width: 62px; height: 24px; border: 1px solid #707070; background: #efefef; padding-left: 4px; flex: none; }
.combo .ar { margin-left: 1px; }
.sq { width: 14px; height: 14px; background: #e2e2e2; border: 1px solid #ccc; }

/* main */
.mainrow { flex: 1; display: flex; min-height: 0; }
.nav { width: 210px; flex: none; display: flex; flex-direction: column; padding: 4px 0 0; }
.navhead { height: 15px; width: 210px; border: 1px solid #a8a8a8; border-radius: 2px; background: #fbfbfb; display: flex; align-items: center; line-height: 13px; flex: none; }
.pin { margin-left: auto; width: 9px; height: 11px; }
.navx { width: 10px; height: 10px; margin: 0 4px 0 8px; }
.navbtn { display: block; width: 209px; height: 22px; margin: 0 0 1px 0; padding: 0; background: #f1f1f1; border: 1px solid; border-color: #fff #a8a8a8 #a8a8a8 #fff; font: 12px/20px "Noto Sans CJK SC", sans-serif; color: #111; flex: none; }
.plusbar { height: 27px; width: 208px; display: flex; align-items: center; gap: 7px; padding-left: 6px; background: linear-gradient(#fff, #f3f3f3); border-left: 1px solid #c8c8c8; flex: none; }
.pm { width: 16px; height: 15px; }
.tree { width: 207px; margin-left: 2px; height: 488px; flex: none; background: #fff; border: 1px solid #a0a0a0; border-width: 1px 2px 1px 1px; padding-top: 1px; line-height: 16px; }
.tree .n { position: relative; }
.row { height: 16px; display: flex; align-items: center; padding-left: 7px; white-space: nowrap; position: relative; }
.row::after { content: ""; position: absolute; left: 16px; top: 8px; width: 6px; border-top: 1px dotted #777; }
.ch { width: 8px; height: 10px; flex: none; }
.row .ic16 { margin-left: 8px; }
.lab { margin-left: 5px; white-space: nowrap; }
.kids { position: relative; }
.n.open:not(.last) > .kids::before { content: ""; position: absolute; left: 11px; top: -1px; bottom: -2px; border-left: 1px dotted #777; }
.leaf { height: 16px; display: flex; align-items: center; padding-left: 43px; position: relative; white-space: nowrap; }
.leaf::before { content: ""; position: absolute; left: 30px; top: 0; height: 16px; border-left: 1px dotted #777; }
.leaf:last-child::before { height: 8px; }
.leaf::after { content: ""; position: absolute; left: 31px; top: 8px; width: 11px; border-top: 1px dotted #777; }
.leaf .lab { margin-left: 4px; }
.picked { background: #d8d8d8; padding: 0 3px 0 0; position: relative; }
.picked::before { content: ""; position: absolute; left: -5px; top: 0; bottom: 0; width: 5px; background: #d8d8d8; }
.tag { width: 15px; height: 14px; margin-left: 2px; }
.newtag { font: bold 8px/9px "Liberation Sans", sans-serif; background: #ffd400; color: #111; padding: 0 1px; margin: -6px 0 0 1px; transform: skewY(-3deg); }

.work { flex: 1; min-width: 0; display: flex; flex-direction: column; padding: 4px 0 3px 5px; }
.toolbar3 { height: 26px; flex: none; display: flex; align-items: center; background: #f6f6f6; border-radius: 3px; padding-left: 4px; white-space: nowrap; }
.toolbar3 > .ti:first-child { margin-left: 0; }
.txt3 { margin-left: 3px; }
.txt7 { margin-left: 7px; }
.floor { width: 63px; height: 24px; margin-left: 4px; background: #fff; display: flex; align-items: center; padding-left: 2px; justify-content: space-between; padding-right: 4px; }
.floor .ar { margin: 0; }
.panes { flex: 1; display: flex; margin-top: 3px; min-height: 0; }
.complist { width: 184px; flex: none; border: 1px solid #a0a0a0; background: #fff; padding: 4px 1px 0 1px; }
.search { height: 24px; border: 1px solid #b0b0b0; display: flex; align-items: center; justify-content: space-between; color: #8c8c8c; padding-left: 2px; }
.ph { font-size: 13.500px; }
.sbtn { width: 24px; height: 22px; display: flex; align-items: center; justify-content: center; background: #f0f0f0; }
.ctree { margin-top: 2px; position: relative; }
.croot { height: 16px; display: flex; align-items: center; padding-left: 10px; }
.croot .ic16 { margin-left: 3px; }
.croot span { margin-left: 6px; }
.clist { position: relative; }
.clist::before { content: ""; position: absolute; left: 30px; top: -2px; bottom: 8px; border-left: 1px dotted #777; }
.clist li { height: 16px; display: flex; align-items: center; padding-left: 42px; position: relative; }
.clist li::before { content: ""; position: absolute; left: 31px; top: 8px; width: 9px; border-top: 1px dotted #777; }
.clist tt { margin-left: 8px; font-size: 11px; }
.clist .sel { background: linear-gradient(90deg, transparent 0 39px, #316fc4 39px 89px, transparent 89px); color: #000; }

.props { flex: 1; background: #fff; margin-left: 2px; padding-left: 6px; position: relative; }
.tabs { height: 20px; border-bottom: 1px solid #d0d0d0; margin-left: -5px; margin-top: -1px; }
.tab { display: block; width: 63px; height: 20px; border: 1px solid #d8d8d8; border-bottom: 0; background: #fff; text-align: center; line-height: 19px; }

.grid { border-collapse: collapse; table-layout: fixed; background: #fff; font-size: 12px; }
.grid th, .grid td { border: 1px solid #bcbcbc; padding: 0; height: 19px; font-weight: 400; overflow: hidden; white-space: nowrap; line-height: 16px; }
.grid th { background: linear-gradient(#fff, #f0f0f0); text-align: center; font: 11px/16px "Liberation Mono", monospace; }
.grid .hd th { height: 22px; font: 12px/16px "Noto Sans CJK SC", sans-serif; background: linear-gradient(#fff, #ededed); }
.grid .hd th.hot { background: linear-gradient(#fbdca4, #f2c368); color: #7c0a78; }
.grid td { padding: 1px 0 0 2px; }
.grid .nm { padding-left: 20px; color: #0000e0; }
.mono { font-family: "Liberation Mono", "Noto Sans CJK SC", monospace; font-size: 11px; letter-spacing: -.6px; }
.grid .cur th { background: #ffd28c; color: #7c0a78; }
.grid .cur td:nth-child(2) { background: #0078d7; color: #fff; }
.grid .cur td:nth-child(3) { background: #d6e8f8; }
.ptab { margin: 6px 0 0; width: 370px; }
.c0 { width: 22px; } .c1 { width: 191px; } .c2 { width: 126px; } .c3 { width: 31px; }
.cb { width: 13px; height: 13px; border: 1px solid #333; background: #fff; margin: 0 auto; position: relative; left: -1px; top: -1px; }

/* status */
.status { height: 20px; flex: none; display: flex; gap: 3px; background: #f0f0f0; border-top: 1px solid #fff; }
.sc { border: 1px solid; border-color: #d8d8d8 #fff #d0d0d0 #d8d8d8; background: #f3f3f3; padding-left: 2px; white-space: nowrap; overflow: hidden; line-height: 18px; }
.s0 { width: 147px; } .s1 { width: 77px; } .s2 { width: 150px; } .s3 { flex: 1; }

/* param window */
.paramwin { position: absolute; left: 1075px; top: 419px; width: 269px; height: 283px; border: 1px solid #5a5a5a; background: linear-gradient(#b9cbdc, #d5e2f0 32px, #d5e2f0); padding: 11px 8px 0; box-shadow: 0 0 0 1px #f4f4f4; }
.pwtitle { color: #9a9a9a; height: 20px; line-height: 16px; }
.pwcanvas { display: block; width: 252px; height: 242px; background: #000; border: 1px solid #eaeaea; }
.w { fill: none; stroke: #fff; stroke-width: 1; vector-effect: non-scaling-stroke; shape-rendering: crispEdges; }
.c { fill: none; stroke: #00ffff; stroke-width: 2; }
.c2 { fill: none; stroke: #00ffff; stroke-width: 2; shape-rendering: crispEdges; }
.red { fill: #ff0000 !important; }
.lb { fill: #fff; font: 11px "Liberation Mono", monospace; text-anchor: middle; }
.tt { fill: #fff; font: 300 16px "Noto Sans CJK SC", sans-serif; text-anchor: middle; }
.pn { fill: #fff; font: 19px "Liberation Serif", serif; text-anchor: middle; }
.pn.s { font-size: 17px; }
.ptt { fill: #fff; font: 300 26px "Liberation Serif", "Noto Sans CJK SC", serif; text-anchor: middle; }

/* dialog */
.dialog { position: absolute; left: 298px; top: 257px; width: 744px; height: 530px; border: 1px solid #3f8fdc; background: #f0f0f0; box-shadow: 0 2px 8px rgba(0,0,0,.25); display: flex; flex-direction: column; }
.dtitle { height: 26px; flex: none; background: #fff; display: flex; align-items: center; justify-content: space-between; padding: 0 10px 0 2px; }
.dclose { width: 11px; height: 11px; }
.dbody { flex: 1; display: flex; min-height: 0; }
.dleft { width: 490px; flex: none; padding-left: 9px; }
.secrow { display: flex; align-items: center; padding: 17px 0 0 15px; height: 38px; }
.dsel { width: 145px; height: 21px; border: 1px solid #adadad; background: #e1e1e1; display: flex; align-items: center; justify-content: space-between; padding: 0 7px 0 3px; margin-left: auto; margin-right: 226px; }
.dch { width: 10px; height: 6px; }
.group { width: 480px; height: 460px; margin-top: 18px; border: 1px solid #d8d8d8; padding: 9px 0 0 3px; position: relative; }
.legend { position: absolute; left: 5px; top: -9px; background: #f0f0f0; padding: 0 2px; line-height: 15px; }
.cells { display: grid; grid-template-columns: repeat(3, 154px); grid-auto-rows: 144px; gap: 4px; }
.cell { background: #f0f0f0; border: 1px solid; border-color: #fff #a0a0a0 #a0a0a0 #fff; padding: 2px 0 0 6px; }
.cell.sel { background: #00ffff; border-color: #00ffff; }
.thumb { display: block; width: 140px; height: 140px; background: #008080; }
.dright { flex: 1; padding: 8px 0 0 22px; min-width: 0; }
.pbox { width: 216px; height: 266px; background: #fff; border: 1px solid #b0b0b0; padding: 1px; }
.qtab { width: 212px; }
.q0 { width: 21px; } .q1 { width: 91px; } .q2 { width: 100px; }
.pgroup { margin: 13px 0 0 -7px; border-top: 1px solid #d8d8d8; border-left: 1px solid #d8d8d8; padding: 10px 0 0 7px; position: relative; }
.legend2 { position: absolute; left: 7px; top: -8px; background: #f0f0f0; line-height: 15px; padding-right: 1px; }
.big { display: block; width: 210px; height: 210px; background: #008080; }

.marks { position: absolute; left: 0; top: 0; width: 1366px; height: 768px; pointer-events: none; }
.marks ellipse { fill: none; stroke: #0000ff; stroke-width: 6.500; }

.badge { position: absolute; left: 401px; top: -25px; width: 42px; height: 42px; border-radius: 50%; background: #3cb54a; border: 1px solid #8fc79a; box-shadow: 0 1px 3px rgba(0,0,0,.5); color: #fff; font: bold 12px/14px "Liberation Sans", sans-serif; text-align: center; padding-top: 25px; }

.ime { position: absolute; left: 1182px; top: 704px; width: 184px; height: 24px; background: #f1f6fb; border: 1px solid #b9d2ea; border-right: 0; display: flex; align-items: center; gap: 7px; }
.sg { width: 27px; height: 25px; margin: 0 0 0 -1px; flex: none; }
.imez { color: #1a72c5; font-weight: 700; font-size: 14px; margin-left: 1px; }
.imep { color: #1a72c5; font-weight: 700; font-size: 11px; width: 12px; }
.imei { width: 16px; height: 16px; flex: none; margin-left: 1px; }
.imen { font: 6px "Liberation Sans", sans-serif; fill: #333; }

/* taskbar */
.taskbar { position: absolute; left: 0; top: 728px; width: 1366px; height: 40px; display: flex; align-items: center; color: #eee;
  background: linear-gradient(90deg, rgba(0,0,0,.82) 0, rgba(0,0,0,.82) 1041px, #03141b 1041px, #03141b 1297px, #0c0c0c 1297px); }
.start { width: 48px; height: 40px; background: #000; display: flex; align-items: center; justify-content: center; flex: none; }
.tsearch { width: 344px; height: 40px; background: #333; display: flex; align-items: center; color: #8c9298; flex: none; position: relative; }
.ring { width: 19px; height: 19px; border: 2px solid #eaeaea; border-radius: 50%; margin-left: 10px; }
.tsearch span { margin-left: 7px; font-size: 13.800px; white-space: nowrap; }
.tmic { width: 12px; height: 18px; margin-left: auto; margin-right: 14px; }
.apps { display: flex; align-items: center; height: 40px; flex: none; padding-left: 2px; }
.ta { width: 49px; height: 40px; display: flex; align-items: center; justify-content: center; }
.tsep { width: 1px; height: 24px; background: #555; box-shadow: 2px 0 0 #444; margin: 0 13px 0 9px; flex: none; }
.act { background: rgba(255,255,255,.2); width: 46px; margin-left: 2px; }
.cpu { width: 60px; margin-left: 127px; display: flex; flex-direction: column; align-items: center; line-height: 17px; font-size: 12px; flex: none; }
.cpu span:first-child { margin-right: 2px; }
.tray { flex: 1; display: flex; align-items: center; height: 40px; padding-left: 18px; min-width: 0; }
.tray svg { flex: none; }
.t1x { width: 9px; height: 6px; }
.t2x { width: 16px; height: 10px; margin-left: 9px; }
.t3x { width: 14px; height: 14px; margin-left: 10px; }
.t4x { width: 16px; height: 14px; margin-left: 8px; }
.t5x { width: 22px; height: 13px; margin-left: 9px; }
.tz { margin-left: 9px; font-size: 13px; font-weight: 700; width: 16px; }
.t6x { width: 16px; height: 16px; margin-left: 13px; }
.clock { width: 60px; margin-left: 17px; display: flex; flex-direction: column; align-items: center; line-height: 20px; font-size: 12.500px; white-space: nowrap; color: #ddd; }
.t7x { width: 16px; height: 15px; margin-left: 21px; }
.ul { position: absolute; top: 38px; height: 2px; background: #76b9ed; }
.u1 { left: 668px; width: 40px; } .u2 { left: 717px; width: 40px; } .u3 { left: 766px; width: 40px; } .u4 { left: 812px; width: 46px; }
```
